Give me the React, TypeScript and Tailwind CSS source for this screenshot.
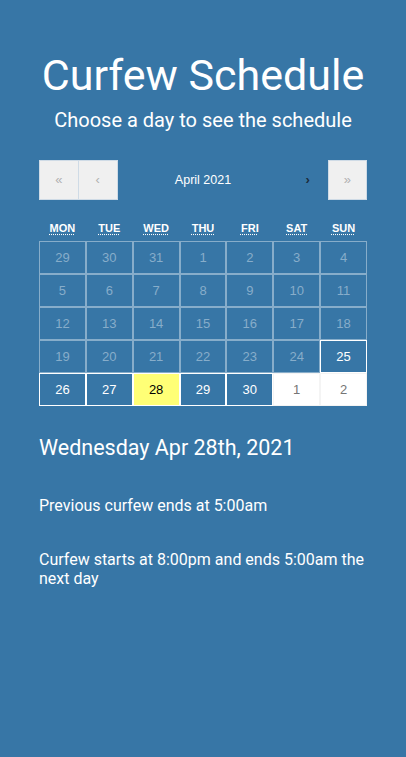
import React from "react";

const weekdays = ["MON", "TUE", "WED", "THU", "FRI", "SAT", "SUN"];

type Tile = { n: number; kind: "past" | "future" | "selected" | "next" };

const tiles: Tile[] = [
  ...[29, 30, 31, 1, 2, 3, 4, 5, 6, 7, 8, 9, 10, 11, 12, 13, 14, 15, 16, 17, 18, 19, 20, 21, 22, 23, 24].map(
    (n) => ({ n, kind: "past" as const })
  ),
  { n: 25, kind: "future" },
  { n: 26, kind: "future" },
  { n: 27, kind: "future" },
  { n: 28, kind: "selected" },
  { n: 29, kind: "future" },
  { n: 30, kind: "future" },
  { n: 1, kind: "next" },
  { n: 2, kind: "next" },
];

function tileClass(kind: Tile["kind"]) {
  switch (kind) {
    case "past":
      return "border-[#87adca] text-[#87adca]";
    case "future":
      return "border-white text-white";
    case "selected":
      return "border-white bg-[#ffff76] text-black";
    case "next":
      return "border-[#f4f4f4] bg-white text-[#757575]";
  }
}

export default function App() {
  return (
    <div className="min-h-screen bg-[#3776a6] text-white font-['Roboto',sans-serif] px-[39px] pt-[50px]">
      <h1 className="text-center text-[43px] leading-[50px]">Curfew Schedule</h1>
      <p className="text-center text-[20px] leading-[24px] mt-[8px]">Choose a day to see the schedule</p>

      <div className="mt-[28px] font-['Liberation_Sans',Arial,sans-serif]">
        <div className="flex h-[40px]">
          <button className="w-[39.5px] bg-[#f0f0f0] border border-[#cfdbe6] text-[#b0b0b0] text-[13px]">«</button>
          <button className="w-[39.5px] bg-[#f0f0f0] border border-l-0 border-[#cfdbe6] text-[#b0b0b0] text-[13px]">‹</button>
          <div className="flex-1 flex items-center justify-center text-[12.5px] text-white pt-[1px]">April 2021</div>
          <button className="w-[39.5px] text-[#1c2b3b] text-[13px] font-bold">›</button>
          <button className="w-[39.5px] bg-[#f0f0f0] border border-[#cfdbe6] text-[#b0b0b0] text-[13px]">»</button>
        </div>

        <div className="grid grid-cols-7 h-[41px] items-end pb-[6px]">
          {weekdays.map((d) => (
            <div key={d} className="text-center text-[11px] font-bold leading-[13px]">
              <abbr className="underline decoration-dotted underline-offset-[2px]" title={d}>
                {d}
              </abbr>
            </div>
          ))}
        </div>

        <div className="grid grid-cols-7">
          {tiles.map((t, i) => (
            <div
              key={i}
              className={`h-[33px] border flex items-center justify-center text-[13px] ${tileClass(t.kind)}`}
            >
              {t.n}
            </div>
          ))}
        </div>
      </div>

      <h2 className="text-[21.5px] leading-[26px] mt-[29px]">Wednesday Apr 28th, 2021</h2>
      <p className="text-[16px] leading-[19px] mt-[35px]">Previous curfew ends at 5:00am</p>
      <p className="text-[16px] leading-[19px] mt-[35px]">Curfew starts at 8:00pm and ends 5:00am the next day</p>
    </div>
  );
}
